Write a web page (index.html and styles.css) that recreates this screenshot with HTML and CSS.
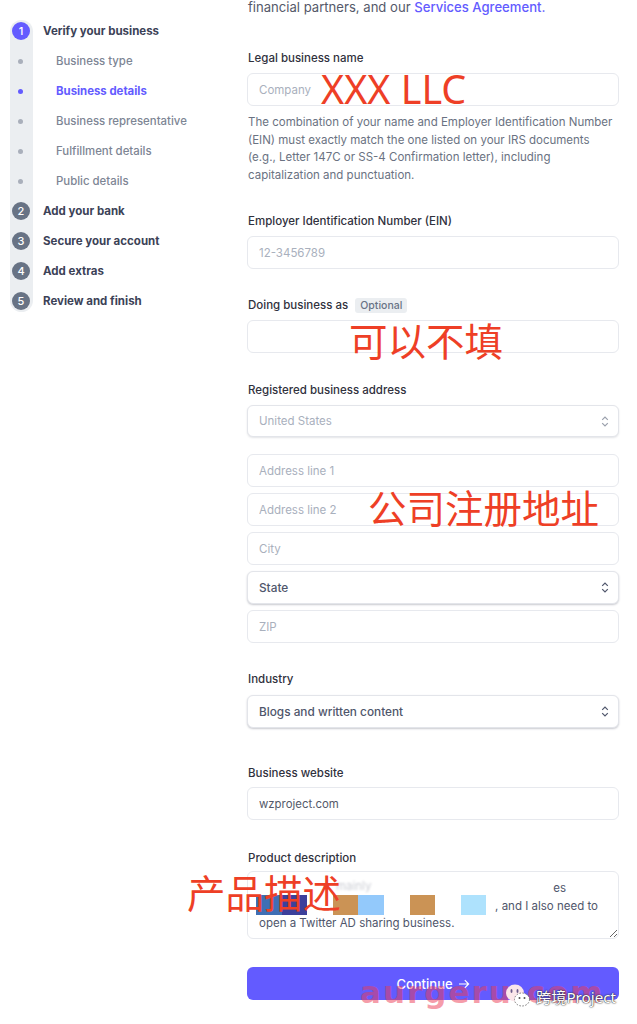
FILE: index.html
```html
<!DOCTYPE html>
<html lang="en">
<head>
  <meta charset="UTF-8">
  <title>Business details</title>
  <link rel="stylesheet" href="styles.css">
</head>
<body>
  <div class="page">

    <nav class="steps">
      <div class="step step-current"><span class="step-num">1</span>Verify your business</div>
      <div class="sub"><span class="sub-dot"></span>Business type</div>
      <div class="sub sub-current"><span class="sub-dot"></span>Business details</div>
      <div class="sub"><span class="sub-dot"></span>Business representative</div>
      <div class="sub"><span class="sub-dot"></span>Fulfillment details</div>
      <div class="sub"><span class="sub-dot"></span>Public details</div>
      <div class="step"><span class="step-num">2</span>Add your bank</div>
      <div class="step"><span class="step-num">3</span>Secure your account</div>
      <div class="step"><span class="step-num">4</span>Add extras</div>
      <div class="step"><span class="step-num">5</span>Review and finish</div>
    </nav>

    <main class="form">
      <p class="intro">financial partners, and our <a href="#">Services Agreement.</a></p>

      <section class="field field-legal">
        <label>Legal business name</label>
        <input type="text" placeholder="Company">
        <p class="help">The combination of your name and Employer Identification Number (EIN) must exactly match the one listed on your IRS documents (e.g., Letter 147C or SS-4 Confirmation letter), including capitalization and punctuation.</p>
      </section>

      <section class="field field-ein">
        <label>Employer Identification Number (EIN)</label>
        <input type="text" placeholder="12-3456789">
      </section>

      <section class="field field-dba">
        <label>Doing business as <span class="tag">Optional</span></label>
        <input type="text">
      </section>

      <section class="field field-address">
        <label>Registered business address</label>
        <div class="select select-disabled">
          United States
          <svg class="updown" viewBox="0 0 10 16"><path d="M1.5 6 5 2.5 8.5 6M1.5 10 5 13.5 8.5 10"/></svg>
        </div>
        <div class="stack">
          <input type="text" placeholder="Address line 1">
          <input type="text" placeholder="Address line 2">
          <input type="text" placeholder="City">
          <div class="select">
            State
            <svg class="updown" viewBox="0 0 10 16"><path d="M1.5 6 5 2.5 8.5 6M1.5 10 5 13.5 8.5 10"/></svg>
          </div>
          <input type="text" placeholder="ZIP">
        </div>
      </section>

      <section class="field field-industry">
        <label>Industry</label>
        <div class="select">
          Blogs and written content
          <svg class="updown" viewBox="0 0 10 16"><path d="M1.5 6 5 2.5 8.5 6M1.5 10 5 13.5 8.5 10"/></svg>
        </div>
      </section>

      <section class="field field-site">
        <label>Business website</label>
        <input class="filled" type="text" value="wzproject.com">
      </section>

      <section class="field field-product">
        <label>Product description</label>
        <div class="area-wrap">
          <textarea>                                                                                           es
                                                                         , and I also need to
open a Twitter AD sharing business.</textarea>
          <span class="blur-text">mainly</span>
          <div class="blur-row">
            <span class="patch patch-blue"></span>
            <span class="patch patch-navy"></span>
            <span class="patch patch-tan patch-gap"></span>
            <span class="patch patch-sky"></span>
            <span class="patch patch-tan patch-gap"></span>
            <span class="patch patch-pale patch-gap"></span>
          </div>
        </div>
      </section>

      <button class="continue">Continue <svg class="arrow" viewBox="0 0 12 12"><path d="M1 6h9.5M6.8 2.2 10.6 6 6.8 9.8"/></svg></button>
    </main>
  </div>

  <!-- red notes and watermark pasted on top of the screenshot -->
  <div class="note note-llc">XXX LLC</div>
  <div class="note note-dba">可以不填</div>
  <div class="note note-addr">公司注册地址</div>
  <div class="note note-prod">产品描述</div>
  <div class="mark-site">aurgeru.com</div>
  <div class="mark-wx">
    <svg class="wx-icon" viewBox="0 0 26 24">
      <ellipse cx="10" cy="9" rx="9" ry="8.5" fill="#fbe6ea"/>
      <ellipse cx="17" cy="15.5" rx="7.5" ry="6.5" fill="#fff" stroke="#777" stroke-dasharray="1.5 1.5"/>
      <ellipse cx="6.5" cy="7" rx="1" ry="2" fill="#6a5a8a"/>
      <ellipse cx="12.5" cy="7" rx="1" ry="2" fill="#6a5a8a"/>
      <circle cx="14.5" cy="14" r="1" fill="#555"/>
      <circle cx="19.5" cy="14" r="1" fill="#555"/>
    </svg>
    跨境Project
  </div>
</body>
</html>
```

FILE: styles.css
```css
* {
  box-sizing: border-box;
}

html, body {
  height: 100%;
}

body {
  margin: 0;
  background: #fff;
  font-family: Inter, "Noto Sans", "Noto Sans CJK SC", sans-serif;
  font-size: 11.5px;
  color: #3c4257;
  overflow: hidden;
  position: relative;
}

.page {
  display: flex;
  align-items: flex-start;
}

/* Left step list */
.steps {
  width: 247px;
  flex: none;
  margin: 20px 0 0 10px;
  position: relative;
}

.steps::before {
  content: "";
  position: absolute;
  left: 0;
  top: 0;
  bottom: 4px;
  width: 23px;
  border-radius: 12px;
  background: #ebeef1;
}

.step, .sub {
  position: relative;
  display: flex;
  align-items: center;
  height: 30px;
  padding-left: 2px;
  font-weight: 700;
  font-size: 11.5px;
  white-space: nowrap;
}

.step:first-child {
  margin-top: -4px;
}

.step-num {
  width: 18px;
  height: 18px;
  margin-right: 13px;
  border-radius: 50%;
  background: #687385;
  color: #fff;
  font-size: 11px;
  font-weight: 500;
  display: flex;
  align-items: center;
  justify-content: center;
}

.step-current .step-num {
  background: #635bff;
}

.sub {
  color: #7d8594;
  font-weight: 500;
  font-size: 11.4px;
}

.sub-dot {
  width: 5px;
  height: 5px;
  margin: 0 33px 0 6px;
  border-radius: 50%;
  background: #a9afbb;
}

.sub-current {
  color: #635bff;
  font-weight: 700;
}

.sub-current .sub-dot {
  background: #635bff;
}

/* Form column */
.form {
  width: 372px;
  flex: none;
  margin-left: -10px;
}

.intro {
  margin: -2px 0 0 1px;
  font-size: 13.1px;
  line-height: 18px;
  color: #545969;
  white-space: nowrap;
}

.intro a {
  color: #635bff;
  font-weight: 500;
  text-decoration: none;
}

.field label {
  display: block;
  height: 16px;
  line-height: 16px;
  margin: 0 0 7px 1px;
  font-weight: 500;
  font-size: 11.5px;
  color: #30313d;
}

.field-legal { margin-top: 34px; }
.field-ein { margin-top: 29px; }
.field-dba { margin-top: 28px; }
.field-address { margin-top: 29px; }
.field-industry { margin-top: 28px; }
.field-site { margin-top: 37px; }
.field-product { margin-top: 30px; }

.field-industry label { margin-bottom: 8px; }
.field-site label { margin-bottom: 6px; }
.field-product label { margin-bottom: 5px; }

input, .select, textarea {
  display: block;
  width: 100%;
  height: 33px;
  padding: 0 11px;
  border: 1px solid #e7e9ee;
  border-radius: 6px;
  background: #fff;
  font: inherit;
  color: #4f566b;
  outline: none;
}

input::placeholder {
  color: #a9b0bd;
}

.filled {
  color: #545969;
  font-size: 11.4px;
}

.select {
  position: relative;
  display: flex;
  align-items: center;
  font-size: 11.8px;
  font-weight: 500;
  box-shadow: 0 1px 2px rgba(60, 66, 87, 0.28);
  border-color: #e3e5ea;
}

.select-disabled {
  height: 32px;
  color: #a9b0bd;
  font-weight: 400;
  font-size: 11.5px;
  box-shadow: 0 1px 2px rgba(60, 66, 87, 0.14);
}

.updown {
  position: absolute;
  right: 9px;
  top: 9px;
  width: 8px;
  height: 13px;
  fill: none;
  stroke: #4f566b;
  stroke-width: 1.5;
}

.select-disabled .updown {
  stroke: #9aa0ac;
}

.stack {
  display: flex;
  flex-direction: column;
  gap: 6px;
  margin-top: 17px;
}

.help {
  margin: 8px 0 0 1px;
  font-size: 11.5px;
  line-height: 17.6px;
  color: #6a7282;
}

.tag {
  display: inline-block;
  margin-left: 4px;
  padding: 0 5px;
  height: 15px;
  line-height: 15px;
  border-radius: 3px;
  background: #ebeef1;
  color: #687385;
  font-size: 10.5px;
}

.area-wrap {
  position: relative;
}

textarea {
  height: 68px;
  padding: 8px 11px 0;
  line-height: 17.5px;
  white-space: pre;
  overflow: hidden;
  font-size: 11.5px;
}

.blur-text {
  position: absolute;
  left: 89px;
  top: 8px;
  color: #8b90a0;
  opacity: 0.45;
  filter: blur(1px);
}

.blur-row {
  position: absolute;
  left: 9px;
  top: 24px;
  display: flex;
}

.patch {
  display: block;
  width: 25.6px;
  height: 20px;
  filter: blur(0.5px);
}

.patch-blue { background: #3f6fb5; }
.patch-navy { background: #3c409b; }
.patch-tan { background: #cb9355; }
.patch-sky { background: #93c9fb; }
.patch-pale { background: #aee2fd; }

.patch-gap {
  margin-left: 25.6px;
}

.continue {
  display: flex;
  align-items: center;
  justify-content: center;
  gap: 5px;
  width: 100%;
  height: 33px;
  margin-top: 28px;
  border: none;
  border-radius: 6px;
  background: #635bff;
  color: #fff;
  font: inherit;
  font-size: 13px;
  font-weight: 500;
}

.arrow {
  width: 12px;
  height: 12px;
  fill: none;
  stroke: #fff;
  stroke-width: 1.2;
}

/* Annotations on top */
.note {
  position: absolute;
  color: #ee3f26;
  font-family: "Noto Sans CJK SC", "Noto Sans", sans-serif;
  font-size: 38.5px;
  white-space: nowrap;
  line-height: 1;
}

.note-llc {
  left: 321px;
  top: 70px;
  font-size: 39.5px;
  font-family: "Noto Sans", sans-serif;
}

.note-dba {
  left: 349px;
  top: 320px;
}

.note-addr {
  left: 368px;
  top: 487px;
}

.note-prod {
  left: 187px;
  top: 872px;
}

.mark-site {
  position: absolute;
  left: 360px;
  top: 972px;
  font-family: "DejaVu Sans", sans-serif;
  font-size: 31px;
  font-weight: 700;
  line-height: 40px;
  color: rgba(235, 60, 85, 0.5);
  letter-spacing: 2px;
  white-space: nowrap;
}

.mark-wx {
  position: absolute;
  left: 505px;
  top: 984px;
  display: flex;
  align-items: center;
  gap: 5px;
  color: #fff;
  font-family: "Noto Sans", "Noto Sans CJK SC", sans-serif;
  font-size: 15.2px;
  text-shadow: 0 0 1px #222, 0 0 2px #333;
  white-space: nowrap;
}

.wx-icon {
  width: 26px;
  height: 24px;
}
```
